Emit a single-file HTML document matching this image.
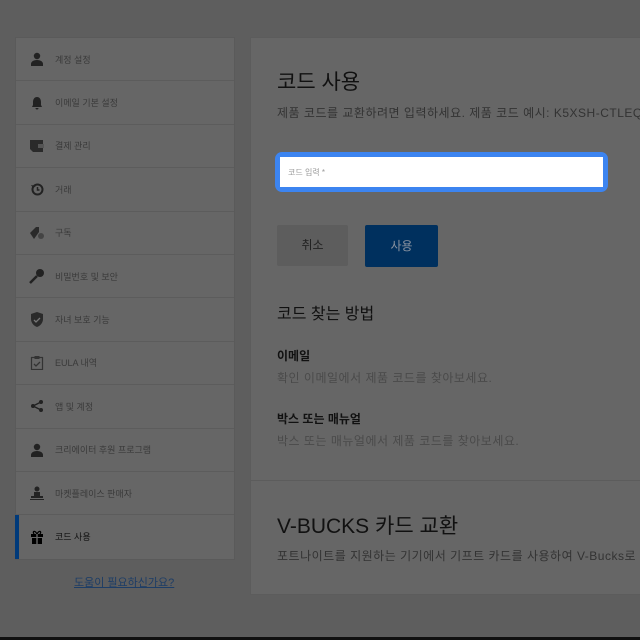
<!DOCTYPE html>
<html><head><meta charset="utf-8"><style>
*{margin:0;padding:0;box-sizing:border-box}
body{width:640px;height:640px;overflow:hidden;background:#5e5e5e;font-family:"Liberation Sans","Noto Sans CJK KR",sans-serif;position:relative}
.side{position:absolute;left:15px;top:37px;width:220px;border:1px solid #5a5a5a;background:#666}
.it{height:43.4px;border-bottom:1px solid #5c5c5c;display:flex;align-items:center;padding-left:13px;font-size:9px;color:#3a3a3a;position:relative}
.it:last-child{border-bottom:none}
.it .ic{width:16px;height:16px;margin-right:10px;display:flex;align-items:center;justify-content:center}
.it.act{color:#111}
.it.act:before{content:"";position:absolute;left:-1px;top:0;bottom:0;width:4px;background:#003a7a}
.help{position:absolute;left:74px;top:574px;font-size:11px;color:#1d3d66;text-decoration:underline}
.main{position:absolute;left:250px;top:37px;width:400px;height:558px;background:#666;border:1px solid #5c5c5c}
h1{position:absolute;left:26px;top:28px;font-size:21px;font-weight:normal;color:#111}
.p{position:absolute;left:26px;font-size:12px;letter-spacing:0.5px;color:#333;white-space:nowrap}
.inp{position:absolute;left:24px;top:114px;width:333px;height:40px;border-radius:7px;background:#3c84f0;padding:5px}
.inp div{background:#fff;height:100%;font-size:8px;color:#999;padding:10px 8px}
.b1{position:absolute;left:26px;top:187px;width:71px;height:41px;background:#5d5d5d;border-radius:2px;color:#222;font-size:12px;text-align:center;line-height:41px}
.b2{position:absolute;left:114px;top:187px;width:73px;height:42px;background:#00305e;border-radius:2px;color:#8a93a0;font-size:12px;text-align:center;line-height:42px}
h2{position:absolute;left:26px;top:262px;font-size:16px;font-weight:normal;color:#111}
.h3{position:absolute;left:26px;font-size:12px;color:#111;font-weight:bold}
.g{color:#4a4a4a}
.div{position:absolute;left:0;right:0;top:442px;border-top:1px solid #5c5c5c}
.bot{position:absolute;left:0;right:0;bottom:0;height:3px;background:#111}
</style></head><body>
<div class="side">
<div class="it"><span class="ic"><svg width="14" height="14" viewBox="0 0 14 14"><circle cx="7" cy="4" r="3.2" fill="#222"/><path d="M1 14v-2c0-2 2-4 6-4s6 2 6 4v2z" fill="#222"/></svg></span>계정 설정</div>
<div class="it"><span class="ic"><svg width="14" height="14" viewBox="0 0 14 14"><path d="M7 1c-3 0-4 3-4 5v3l-1 2h10l-1-2V6c0-2-1-5-4-5z M5.5 12a1.5 1.5 0 003 0z" fill="#222"/></svg></span>이메일 기본 설정</div>
<div class="it"><span class="ic"><svg width="16" height="15" viewBox="0 0 16 15"><path d="M1 2h13v12H4L1 11z" fill="#2a2a2a"/><rect x="9" y="6" width="6" height="4" fill="#555"/></svg></span>결제 관리</div>
<div class="it"><span class="ic"><svg width="14" height="14" viewBox="0 0 14 14"><circle cx="7.5" cy="7.5" r="5" fill="none" stroke="#222" stroke-width="2"/><path d="M1 3l2 3 3-2" fill="#222"/><path d="M7.5 5v3h2" stroke="#222" stroke-width="1.5" fill="none"/></svg></span>거래</div>
<div class="it"><span class="ic"><svg width="16" height="14" viewBox="0 0 16 14"><path d="M1 7l6-6h3v5L5 13z" fill="#2a2a2a"/><circle cx="12" cy="10" r="3" fill="#444"/></svg></span>구독</div>
<div class="it"><span class="ic"><svg width="16" height="16" viewBox="0 0 16 16"><circle cx="11" cy="5" r="4" fill="#222"/><path d="M8 8L1 15" stroke="#222" stroke-width="2.5"/></svg></span>비밀번호 및 보안</div>
<div class="it"><span class="ic"><svg width="14" height="15" viewBox="0 0 14 15"><path d="M7 0l6 2v5c0 4-3 7-6 8-3-1-6-4-6-8V2z" fill="#2a2a2a"/><path d="M4 8l2 2 4-4" stroke="#777" stroke-width="1.3" fill="none"/></svg></span>자녀 보호 기능</div>
<div class="it"><span class="ic"><svg width="14" height="15" viewBox="0 0 14 15"><rect x="1.5" y="2.5" width="11" height="12" fill="none" stroke="#333" stroke-width="1.2"/><rect x="4.5" y="1" width="5" height="3" fill="#333"/><path d="M4 9l2 2 4-4" stroke="#333" stroke-width="1.3" fill="none"/></svg></span>EULA 내역</div>
<div class="it"><span class="ic"><svg width="14" height="14" viewBox="0 0 14 14"><circle cx="3" cy="7" r="2" fill="#222"/><circle cx="11" cy="3" r="2" fill="#222"/><circle cx="11" cy="11" r="2" fill="#222"/><path d="M3 7L11 3M3 7l8 4" stroke="#222" stroke-width="1.3"/></svg></span>앱 및 계정</div>
<div class="it"><span class="ic"><svg width="14" height="14" viewBox="0 0 14 14"><circle cx="7" cy="4" r="3.2" fill="#222"/><path d="M1 14v-2c0-2 2-4 6-4s6 2 6 4v2z" fill="#222"/></svg></span>크리에이터 후원 프로그램</div>
<div class="it"><span class="ic"><svg width="16" height="15" viewBox="0 0 16 15"><circle cx="8" cy="3" r="2.5" fill="#222"/><rect x="5" y="6" width="6" height="5" fill="#222"/><rect x="2" y="10" width="12" height="2" fill="#222"/><rect x="1" y="13" width="14" height="1" fill="#222"/></svg></span>마켓플레이스 판매자</div>
<div class="it act"><span class="ic"><svg width="14" height="14" viewBox="0 0 14 14"><path d="M7 4C5 0 2 1 4 4M7 4c2-4 5-3 3 0" stroke="#000" stroke-width="1.3" fill="none"/><rect x="1" y="4" width="12" height="3" fill="#000"/><rect x="2" y="8" width="10" height="6" fill="#000"/><rect x="6.3" y="4" width="1.4" height="10" fill="#666"/></svg></span>코드 사용</div>
</div>
<div class="help">도움이 필요하신가요?</div>
<div class="main">
<h1>코드 사용</h1>
<div class="p" style="top:66px">제품 코드를 교환하려면 입력하세요. 제품 코드 예시: K5XSH-CTLEQ-</div>
<div class="inp"><div>코드 입력 *</div></div>
<div class="b1">취소</div>
<div class="b2">사용</div>
<h2>코드 찾는 방법</h2>
<div class="h3" style="top:309px">이메일</div>
<div class="p g" style="top:331px">확인 이메일에서 제품 코드를 찾아보세요.</div>
<div class="h3" style="top:372px">박스 또는 매뉴얼</div>
<div class="p g" style="top:394px">박스 또는 매뉴얼에서 제품 코드를 찾아보세요.</div>
<div class="div"></div>
<h1 style="top:472px">V-BUCKS 카드 교환</h1>
<div class="p" style="top:509px">포트나이트를 지원하는 기기에서 기프트 카드를 사용하여 V-Bucks로</div>
</div>
<div class="bot"></div>
</body></html>
